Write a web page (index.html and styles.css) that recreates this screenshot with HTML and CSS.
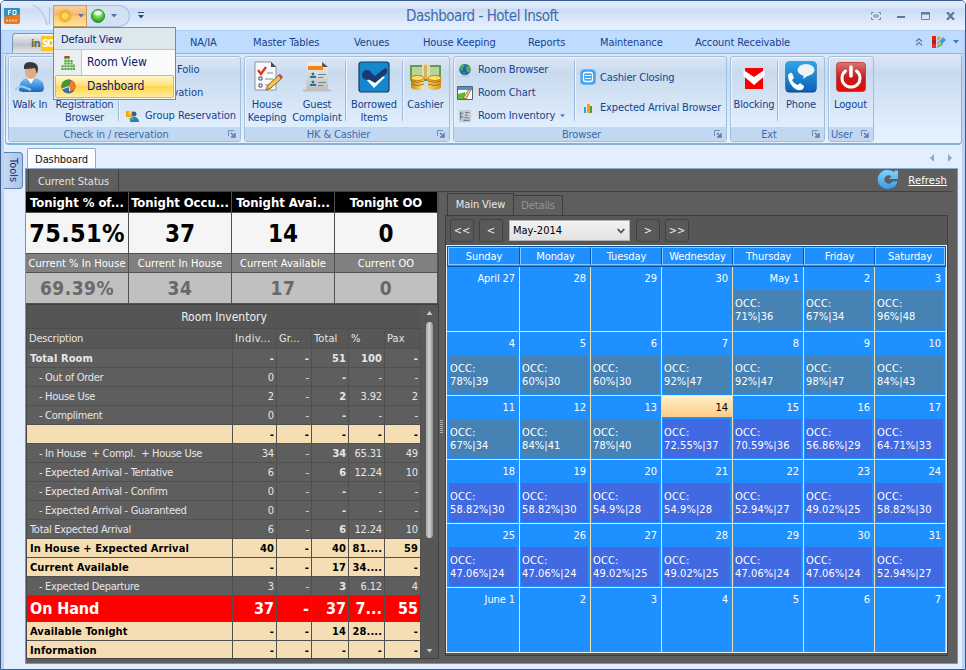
FILE: index.html
```html
<!DOCTYPE html>
<html lang="en">
<head>
<meta charset="utf-8">
<title>Dashboard - Hotel Insoft</title>
<link rel="stylesheet" href="styles.css">
</head>
<body>
<svg width="0" height="0" class="defs">
  <defs>
    <linearGradient id="gBlue" x1="0" y1="0" x2="0" y2="1"><stop offset="0" stop-color="#7cc4f4"/><stop offset="1" stop-color="#1567c4"/></linearGradient>
    <linearGradient id="gSky" x1="0" y1="0" x2="0" y2="1"><stop offset="0" stop-color="#2fa4e8"/><stop offset="1" stop-color="#0b63b8"/></linearGradient>
    <linearGradient id="gRed" x1="0" y1="0" x2="0" y2="1"><stop offset="0" stop-color="#d87878"/><stop offset=".5" stop-color="#c81c1c"/><stop offset="1" stop-color="#e80808"/></linearGradient>
    <linearGradient id="gGold" x1="0" y1="0" x2="1" y2="0"><stop offset="0" stop-color="#c88a10"/><stop offset=".4" stop-color="#ffe680"/><stop offset="1" stop-color="#d89a18"/></linearGradient>
    <linearGradient id="gPaper" x1="0" y1="0" x2="0" y2="1"><stop offset="0" stop-color="#eeeeee"/><stop offset="1" stop-color="#bdbdbd"/></linearGradient>
    <linearGradient id="gRefresh" x1="0" y1="0" x2="0" y2="1"><stop offset="0" stop-color="#7fd2fb"/><stop offset="1" stop-color="#359df0"/></linearGradient>
    <radialGradient id="gOrb" cx=".5" cy=".3" r=".7"><stop offset="0" stop-color="#e4ffd8"/><stop offset=".45" stop-color="#6fd84e"/><stop offset="1" stop-color="#22901c"/></radialGradient>
    <symbol id="launch" viewBox="0 0 8 8"><path d="M0.5 6V.5H6" fill="none" stroke="#6f8fb5"/><path d="M3 3l3 3M7 3v4H3" fill="none" stroke="#5878a5" stroke-width="1.4"/></symbol>
    <symbol id="down" viewBox="0 0 6 4"><path d="M0 0h6L3 3.5z"/></symbol>
    <symbol id="globe" viewBox="0 0 16 16"><circle cx="8" cy="7.5" r="6.5" fill="#1e66b4"/><path d="M3 3c2-2 4-2 5-1L7 4 5 6 6 8 4 9 2 6zM9 4l4-1 1.5 4-2 4-2-1-1-3zM6 10l2 1-1 3z" fill="#52b04a"/><path d="M4 15h8" stroke="#aebccc"/></symbol>
  </defs>
</svg>
<div class="window">
  <header class="titlebar">
    <svg class="app-icon" viewBox="0 0 16 16" width="16" height="16"><rect width="16" height="10" rx="1" fill="#2a92c8"/><path d="M0 9l16-3v8q0 2-2 2H2q-2 0-2-2z" fill="#e87820"/><path d="M4.500 7V2.500H7M4.500 4.500h2M9 2.500h3v4H9z" stroke="#fff" fill="none"/><path d="M2 12.500h12" stroke="#f7c08a" stroke-width="2" stroke-dasharray="2 1"/></svg>
    <div class="quick">
      <svg class="curve" viewBox="0 0 20 22" width="20" height="22"><path d="M3 1h14v19h-3Q11 4 3 1" fill="#d6e4f5"/><path d="M0 .5Q10 3 14 20" fill="none" stroke="#a9c0de"/><path d="M16.500 2v17" stroke="#a9c0de"/></svg>
      <div class="q-btn active">
        <svg viewBox="0 0 16 16" width="16" height="16"><path d="M8 1v14M1 8h14M3 3l10 10M13 3L3 13M5.300 1.500l5.400 13M10.700 1.500l-5.400 13M1.500 5.300l13 5.400M1.500 10.700l13-5.400" stroke="#f2ae18" stroke-width="1.200"/><circle cx="8" cy="8" r="4.300" fill="#ffd45e" stroke="#e6a010"/></svg>
        <svg class="caret" viewBox="0 0 6 4" width="6" height="4"><use href="#down"/></svg>
      </div>
      <div class="q-btn tail">
        <svg viewBox="0 0 16 16" width="16" height="16"><circle cx="8" cy="8" r="6.500" fill="url(#gOrb)" stroke="#2c8a2c"/><ellipse cx="8" cy="5" rx="4" ry="2.200" fill="#fff" opacity=".65"/></svg>
        <svg class="caret" viewBox="0 0 6 4" width="6" height="4"><use href="#down"/></svg>
      </div>
      <svg class="more" viewBox="0 0 6 7" width="6" height="7"><path d="M0 .5h6" stroke="#2b4c85"/><path d="M0 3h6L3 6.500z" fill="#2b4c85"/></svg>
    </div>
    <h1>Dashboard - Hotel Insoft</h1>
    <div class="win-buttons">
      <svg viewBox="0 0 10 8" width="10" height="8"><path d="M.5 2.500v-2h2M7.500.5h2v2M9.500 5.500v2h-2M2.500 7.500h-2v-2M3 3h4v2H3z" fill="none" stroke="#7085a3"/></svg>
      <svg viewBox="0 0 8 8" width="8" height="8"><path d="M0 5h8" stroke="#60779c" stroke-width="2"/></svg>
      <svg viewBox="0 0 9 8" width="9" height="8"><path d="M.5.5h8v7h-8z" fill="none" stroke="#7085a3"/><path d="M0 1.500h9" stroke="#60779c" stroke-width="2"/></svg>
      <svg viewBox="0 0 9 8" width="9" height="8"><path d="M1 0l7 8M8 0L1 8" stroke="#60779c" stroke-width="2.200"/></svg>
    </div>
  </header>

  <nav class="tabs">
    <div class="app-tab"><b>in</b><span>SO</span></div>
    <div class="tab-list">
      <span>NA/IA</span><span>Master Tables</span><span>Venues</span><span>House Keeping</span><span>Reports</span><span>Maintenance</span><span>Account Receivable</span>
    </div>
    <div class="tab-tools">
      <svg viewBox="0 0 8 8" width="8" height="8"><path d="M1 3.500L4 .8l3 2.700M1 7.300l3-2.700 3 2.700" fill="none" stroke="#5c79a8" stroke-width="1.300"/></svg>
      <svg viewBox="0 0 15 14" width="15" height="14"><path d="M1 1h4v4H1z" fill="#f01818"/><path d="M1 5h4v4H1z" fill="#b02020"/><path d="M1 9h4v4H1z" fill="#ee2c2c"/><path d="M6 2l3-1 1 3-4 2z" fill="#f4a040"/><path d="M6 7l3-2 1 2-4 3z" fill="#b8a878"/><path d="M6 11l5-4 1 3-6 3z" fill="#78b858"/><path d="M9 6l3-4 3 3-4 4z" fill="#2f9bea"/></svg>
      <svg class="caret" viewBox="0 0 6 4" width="6" height="4"><use href="#down"/></svg>
    </div>
  </nav>

  <section class="ribbon">
    <div class="group g-check">
      <div class="body">
        <div class="big walk"><svg viewBox="0 0 32 32" width="32" height="32"><path d="M5 30q0-12 8-13h8q9 2 9 10 0 4-4 4H9z" fill="url(#gBlue)"/><path d="M13 17l4 6 4-7z" fill="#fff"/><ellipse cx="17" cy="10" rx="6" ry="8" fill="#e4ab7e"/><path d="M10 8Q9 1 16 1q8 0 8 7l-1 5-2-6q-6 1-10 1z" fill="#38383a"/><path d="M1 29q5-5 9-3l7 3" fill="none" stroke="#9dcbee" stroke-width="2"/></svg><span>Walk In</span></div>
        <div class="big reg"><i></i><span>Registration<br>Browser</span></div>
        <i class="sep"></i>
        <div class="small-list">
          <div><i></i><span>Guest Folio</span></div>
          <div><i></i><span>Reservation</span></div>
          <div><svg viewBox="0 0 14 14" width="14" height="14"><path d="M1 2h6v6H1z" fill="#f3a514"/><circle cx="6" cy="4" r="2.500" fill="#fcd34a"/><circle cx="9" cy="5" r="2.500" fill="#48607d"/><path d="M5 13q0-6 5-5 4 1 4 5z" fill="#2381ba"/><path d="M3 10l5-2 1 3z" fill="#62ad3d"/></svg><span>Group Reservation</span></div>
        </div>
      </div>
      <div class="caption"><span>Check in / reservation</span><svg viewBox="0 0 8 8" width="8" height="8"><use href="#launch"/></svg></div>
    </div>

    <div class="group g-hk">
      <div class="body">
        <div class="big hk"><svg viewBox="0 0 32 32" width="32" height="32"><path d="M4 1h16l5 5v23H4z" fill="#fbfbfd" stroke="#8d929c"/><path d="M20 1v5h5z" fill="#454a54"/><path d="M7 9l3 4 5-7" fill="none" stroke="#e03420" stroke-width="2.300"/><path d="M8 16h3v3H8zM8 23h3v3H8z" fill="none" stroke="#444e60"/><path d="M16 12h6M14 18h8M14 24h4" stroke="#7888a0"/><path d="M15 29l2-5L28 14l3 3-11 10z" fill="#f3c64a" stroke="#85602a"/><path d="M27 14l2-1 3 3-2 2z" fill="#c83c50"/></svg><span>House<br>Keeping</span></div>
        <div class="big guest"><svg viewBox="0 0 32 32" width="32" height="32"><path d="M2 29.500h28" stroke="#b9c0c9" stroke-width="2"/><path d="M6 1h15l6 5v24H5z" fill="url(#gPaper)"/><path d="M21 1v5h6z" fill="#555"/><path d="M7 5h15v4H7z" fill="#ef8711"/><circle cx="12" cy="13" r="1.500" fill="#24739c"/><circle cx="12" cy="21" r="1.500" fill="#24739c"/><path d="M9 16h6M9 24h6" stroke="#24739c" stroke-width="2"/><path d="M17 13.500h8M17 16.500h5M17 21.500h8M17 24.500h5" stroke="#748692"/></svg><span>Guest<br>Complaint</span></div>
        <i class="sep"></i>
        <div class="big borrow"><svg viewBox="0 0 32 32" width="32" height="32"><rect x="1" y="1" width="30" height="30" rx="2.500" fill="#1686cf" stroke="#173c5d" stroke-width="1.200"/><path d="M7 17l9 10 11-11-4-1-6 5-5-5z" fill="#fff"/><circle cx="9" cy="14" r="5" fill="#173b70"/><path d="M9 9.500l8 5.500L27 7l2 1v4L17 22l-7-4z" fill="#173b70"/></svg><span>Borrowed<br>Items</span></div>
        <i class="sep"></i>
        <div class="big cash"><svg viewBox="0 0 34 32" width="34" height="32"><path d="M1 4h31v16H1z" fill="#679c4a"/><path d="M3 6h27v12H3z" fill="#b8d49b"/><path d="M13 3h8v15h-8z" fill="#e3dcb0"/><path d="M15 4h3v14h-3z" fill="#d6b262"/><path d="M2 17h13v10q-7 4-13 0zM19 17h13v10q-7 4-13 0z" fill="url(#gGold)"/><path d="M2 20q7 3 13 0M2 23q7 3 13 0M19 20q7 3 13 0M19 23q7 3 13 0" stroke="#a86d10" fill="none"/><ellipse cx="8.500" cy="17" rx="6.500" ry="2.500" fill="#ffdf63" stroke="#bd820d"/><ellipse cx="25.500" cy="17" rx="6.500" ry="2.500" fill="#ffdf63" stroke="#bd820d"/></svg><span>Cashier</span></div>
      </div>
      <div class="caption"><span>HK &amp; Cashier</span><svg viewBox="0 0 8 8" width="8" height="8"><use href="#launch"/></svg></div>
    </div>

    <div class="group g-browser">
      <div class="body">
        <div class="small-list">
          <div><svg viewBox="0 0 16 16" width="14" height="14"><use href="#globe"/></svg><span>Room Browser</span></div>
          <div><svg viewBox="0 0 16 16" width="16" height="16"><path d="M.5 1.500h15v13H.5z" fill="#fff" stroke="#56606c"/><path d="M1 2h14v3H1z" fill="#379be3"/><path d="M1 9l7-2v7H1z" fill="#65b735"/><path d="M6 13l6-9 2 1-5 9z" fill="#edc784" stroke="#77583a" stroke-width=".7"/></svg><span>Room Chart</span></div>
          <div><svg viewBox="0 0 16 16" width="14" height="14"><path d="M1 1h14v14H1z" fill="#c9cdd1"/><path d="M3 3v9M3 5h3M3 9h3M8 4h5M8 7h3M7 10h6M6 13h7" stroke="#70808f" stroke-width="1.400"/></svg><span>Room Inventory</span><svg class="caret" viewBox="0 0 6 4" width="5" height="4"><use href="#down"/></svg></div>
        </div>
        <i class="sep"></i>
        <div class="small-list two">
          <div><svg viewBox="0 0 16 16" width="16" height="16"><rect x=".5" y=".5" width="15" height="15" rx="3.500" fill="#42a2ee" stroke="#6cb8ee"/><rect x="3.500" y="3.500" width="9" height="9" rx="2" fill="none" stroke="#fff" stroke-width="1.300"/><path d="M5 6.500h6M5 9.500h6" stroke="#fff"/></svg><span>Cashier Closing</span></div>
          <div><svg viewBox="0 0 14 14" width="14" height="14"><path d="M3 1h7l3 3v9H3z" fill="#e3e5e8"/><path d="M3 7h2v6H3z" fill="#23a0e8"/><path d="M6 4h3v9H6z" fill="#f2a01c"/><path d="M9 6h2v7H9z" fill="#4c9e3d"/></svg><span>Expected Arrival Browser</span></div>
        </div>
      </div>
      <div class="caption"><span>Browser</span><svg viewBox="0 0 8 8" width="8" height="8"><use href="#launch"/></svg></div>
    </div>

    <div class="group g-ext">
      <div class="body">
        <div class="big block"><svg viewBox="0 0 32 32" width="32" height="32"><path d="M7 7h18v21H7z" fill="#f80000"/><path d="M5.500 9L16 16l10.500-7v6L16 24 5.500 15z" fill="#fff"/></svg><span>Blocking</span></div>
        <i class="sep"></i>
        <div class="big phone"><svg viewBox="0 0 32 32" width="32" height="32"><rect x=".5" y=".5" width="31" height="31" rx="4" fill="#12406f"/><rect x=".5" y=".5" width="31" height="30" rx="4" fill="url(#gSky)"/><path d="M3 14q2-3 4-2l2 5-2 2q2 4 6 5l2-2 4 3q0 3-3 4-5 1-9-4-4-5-4-11z" fill="#fff"/><ellipse cx="21" cy="9" rx="8.500" ry="6" fill="#eef1f5"/><path d="M19 12l-1 6 6-4z" fill="#eef1f5"/></svg><span>Phone</span></div>
      </div>
      <div class="caption"><span>Ext</span><svg viewBox="0 0 8 8" width="8" height="8"><use href="#launch"/></svg></div>
    </div>

    <div class="group g-user">
      <div class="body">
        <div class="big logout"><svg viewBox="0 0 32 32" width="32" height="32"><rect x="1.500" y="1.500" width="29" height="29" rx="3" fill="url(#gRed)" stroke="#b44" /><path d="M10.500 10a9 9 0 1 0 11 0" fill="none" stroke="#fff" stroke-width="3" stroke-linecap="round"/><path d="M16 6v9" stroke="#fff" stroke-width="3.500" stroke-linecap="round"/></svg><span>Logout</span></div>
      </div>
      <div class="caption"><span>User</span><svg viewBox="0 0 8 8" width="8" height="8"><use href="#launch"/></svg></div>
    </div>
  </section>

  <main class="workspace">
    <aside class="tools-tab"><span>Tools</span></aside>
    <div class="document">
      <div class="doc-tabs"><span class="doc-tab">Dashboard</span><svg viewBox="0 0 24 8" width="24" height="8"><path d="M5 0v8L1 4zM19 0v8l4-4z" fill="#8fa6c6"/></svg></div>
      <div class="board">
        <div class="board-head">
          <span class="status-tab">Current Status</span>
          <div class="refresh"><svg viewBox="0 0 22 20" width="22" height="20"><path d="M18 1.500h3v8.500h-9l2.500-2.800a4.300 4.300 0 1 0 1 5.300h5A10 9.500 0 1 1 17 3z" fill="url(#gRefresh)"/></svg><a>Refresh</a></div>
        </div>
        <div class="panes">
          <div class="left">
            <div class="stats">
              <div class="s1">Tonight % of...</div><div class="s1">Tonight Occu...</div><div class="s1">Tonight Avai...</div><div class="s1">Tonight OO</div>
              <div class="s2">75.51%</div><div class="s2">37</div><div class="s2">14</div><div class="s2">0</div>
              <div class="s3">Current % In House</div><div class="s3">Current In House</div><div class="s3">Current Available</div><div class="s3">Current OO</div>
              <div class="s4">69.39%</div><div class="s4">34</div><div class="s4">17</div><div class="s4">0</div>
            </div>
            <div class="inventory">
              <div class="inv-main">
                <div class="inv-title">Room Inventory</div>
                <div class="row head"><span>Description</span><span>Indiv...</span><span>Gr...</span><span>Total</span><span>%</span><span>Pax</span></div>
                <div class="row total"><span>Total Room</span><span>-</span><span>-</span><span>51</span><span>100</span><span>-</span></div>
                <div class="row sub"><span>- Out of Order</span><span>0</span><span>-</span><span>-</span><span>-</span><span>-</span></div>
                <div class="row sub"><span>- House Use</span><span>2</span><span>-</span><span>2</span><span>3.92</span><span>2</span></div>
                <div class="row sub"><span>- Compliment</span><span>0</span><span>-</span><span>-</span><span>-</span><span>-</span></div>
                <div class="row wheat"><span></span><span>-</span><span>-</span><span>-</span><span>-</span><span>-</span></div>
                <div class="row sub"><span>- In House &nbsp;+ Compl. &nbsp;+ House Use</span><span>34</span><span>-</span><span>34</span><span>65.31</span><span>49</span></div>
                <div class="row sub"><span>- Expected Arrival - Tentative</span><span>6</span><span>-</span><span>6</span><span>12.24</span><span>10</span></div>
                <div class="row sub"><span>- Expected Arrival - Confirm</span><span>0</span><span>-</span><span>-</span><span>-</span><span>-</span></div>
                <div class="row sub"><span>- Expected Arrival - Guaranteed</span><span>0</span><span>-</span><span>-</span><span>-</span><span>-</span></div>
                <div class="row"><span>Total Expected Arrival</span><span>6</span><span>-</span><span>6</span><span>12.24</span><span>10</span></div>
                <div class="row wheat"><span>In House + Expected Arrival</span><span>40</span><span>-</span><span>40</span><span>81....</span><span>59</span></div>
                <div class="row wheat"><span>Current Available</span><span>-</span><span>-</span><span>17</span><span>34....</span><span>-</span></div>
                <div class="row sub"><span>- Expected Departure</span><span>3</span><span>-</span><span>3</span><span>6.12</span><span>4</span></div>
                <div class="row red"><span>On Hand</span><span>37</span><span>-</span><span>37</span><span>7...</span><span>55</span></div>
                <div class="row wheat"><span>Available Tonight</span><span>-</span><span>-</span><span>14</span><span>28....</span><span>-</span></div>
                <div class="row wheat last"><span>Information</span><span>-</span><span>-</span><span>-</span><span>-</span><span>-</span></div>
              </div>
              <div class="scroll"><svg viewBox="0 0 6 4" width="7" height="4"><path d="M0 4h6L3 0z"/></svg><i></i><svg viewBox="0 0 6 4" width="7" height="4"><use href="#down"/></svg></div>
            </div>
          </div>
          <div class="splitter"><i></i></div>
          <div class="right">
            <div class="view-tabs"><span class="on">Main View</span><span>Details</span></div>
            <div class="view">
              <div class="toolbar">
                <span class="btn">&lt;&lt;</span><span class="btn">&lt;</span>
                <div class="combo"><span>May-2014</span><svg viewBox="0 0 8 6" width="8" height="6"><path d="M.7 1l3.300 3.500L7.300 1" fill="none" stroke="#505050" stroke-width="1.800"/></svg></div>
                <span class="btn">&gt;</span><span class="btn">&gt;&gt;</span>
              </div>
              <div class="calendar">
                <div class="days"><span>Sunday</span><span>Monday</span><span>Tuesday</span><span>Wednesday</span><span>Thursday</span><span>Friday</span><span>Saturday</span></div>
                <div class="weeks">
                  <div><b>April 27</b></div><div><b>28</b></div><div><b>29</b></div><div><b>30</b></div><div><b>May 1</b><p>OCC:<br>71%|36</p></div><div><b>2</b><p>OCC:<br>67%|34</p></div><div><b>3</b><p>OCC:<br>96%|48</p></div>
                  <div><b>4</b><p>OCC:<br>78%|39</p></div><div><b>5</b><p>OCC:<br>60%|30</p></div><div><b>6</b><p>OCC:<br>60%|30</p></div><div><b>7</b><p>OCC:<br>92%|47</p></div><div><b>8</b><p>OCC:<br>92%|47</p></div><div><b>9</b><p>OCC:<br>98%|47</p></div><div><b>10</b><p>OCC:<br>84%|43</p></div>
                  <div><b>11</b><p>OCC:<br>67%|34</p></div><div><b>12</b><p>OCC:<br>84%|41</p></div><div><b>13</b><p>OCC:<br>78%|40</p></div><div class="today"><b>14</b><p class="f">OCC:<br>72.55%|37</p></div><div><b>15</b><p class="f">OCC:<br>70.59%|36</p></div><div><b>16</b><p class="f">OCC:<br>56.86%|29</p></div><div><b>17</b><p class="f">OCC:<br>64.71%|33</p></div>
                  <div><b>18</b><p class="f">OCC:<br>58.82%|30</p></div><div><b>19</b><p class="f">OCC:<br>58.82%|30</p></div><div><b>20</b><p class="f">OCC:<br>54.9%|28</p></div><div><b>21</b><p class="f">OCC:<br>54.9%|28</p></div><div><b>22</b><p class="f">OCC:<br>52.94%|27</p></div><div><b>23</b><p class="f">OCC:<br>49.02%|25</p></div><div><b>24</b><p class="f">OCC:<br>58.82%|30</p></div>
                  <div><b>25</b><p class="f">OCC:<br>47.06%|24</p></div><div><b>26</b><p class="f">OCC:<br>47.06%|24</p></div><div><b>27</b><p class="f">OCC:<br>49.02%|25</p></div><div><b>28</b><p class="f">OCC:<br>49.02%|25</p></div><div><b>29</b><p class="f">OCC:<br>47.06%|24</p></div><div><b>30</b><p class="f">OCC:<br>47.06%|24</p></div><div><b>31</b><p class="f">OCC:<br>52.94%|27</p></div>
                  <div><b>June 1</b></div><div><b>2</b></div><div><b>3</b></div><div><b>4</b></div><div><b>5</b></div><div><b>6</b></div><div><b>7</b></div>
                </div>
              </div>
            </div>
          </div>
        </div>
      </div>
    </div>
  </main>

  <div class="menu">
    <div class="menu-head">Default View</div>
    <div class="item"><svg viewBox="0 0 14 14" width="14" height="14"><path d="M4.500 14V0M7.500 14V0M10.500 14V4M1.500 14V9M13 14V8" stroke="#58a838" stroke-width="2.300" stroke-dasharray="2 .7"/><path d="M3.500 1h5" stroke="#e03030" stroke-width="2"/></svg><span>Room View</span></div>
    <div class="item hot"><svg viewBox="0 0 15 15" width="15" height="15"><circle cx="7.500" cy="7.500" r="7" fill="#3c6ea0"/><path d="M7.500 7.500L1 10Q-1 3 5 1l4-.5z" fill="#46962e"/><path d="M8 7l2-6q5 2 5 7-2 4-6 4z" fill="#f07a28"/><path d="M1 10l7-2.500 1 5" fill="none" stroke="#e8f0f4"/></svg><span>Dashboard</span></div>
  </div>
</div>
</body>
</html>
```
FILE: styles.css
```css
* { box-sizing: border-box; }
body { margin: 0; overflow: hidden; font: 11px/13px Tahoma, "DejaVu Sans Condensed", "DejaVu Sans", sans-serif; font-stretch: condensed; letter-spacing: -.3px; white-space: nowrap; color: #15428b; }
svg { display: block; flex: none; }
.defs { position: absolute; }
.caret { fill: #4f74ad; }
.window { position: relative; width: 966px; height: 670px; display: flex; flex-direction: column; background: #e3efff; border: 1px solid #3b5a8c; border-radius: 5px 5px 0 0; box-shadow: inset 3px 0 #bcd2f0, inset -3px 0 #bcd2f0; }

.titlebar { height: 30px; flex: none; display: flex; align-items: center; background: linear-gradient(#e3edfb 0, #d9e6f8 7px, #cbdcf3 8px, #e8f2ff 28px); border-bottom: 1px solid #aed0f5; border-radius: 4px 4px 0 0; position: relative; }
.app-icon { margin-left: 3px; }
.quick { display: flex; align-items: center; margin-left: 13px; height: 22px; }
.q-btn { height: 22px; display: flex; align-items: center; }
.q-btn.active { width: 34px; padding-left: 3px; gap: 5px; border: 1px solid #c59a5c; background: linear-gradient(#fbd0a0, #f6b566 45%, #fbc77a 50%, #ffe59b); }
.q-btn.tail { width: 43px; padding-left: 3px; gap: 5px; border: 1px solid #a9c0de; border-left: 0; border-radius: 0 11px 11px 0; background: #d2e1f4; }
.more { margin-left: 8px; }
h1 { margin: 0 0 0 262px; width: 160px; font-size: 15px; line-height: 18px; font-weight: 400; color: #3e6aaa; letter-spacing: -.5px; }
.win-buttons { margin-left: auto; margin-right: 10px; display: flex; gap: 16px; }

.tabs { height: 23px; flex: none; margin: 0 2px; padding-left: 9px; display: flex; align-items: center; background: #bfdbff; border-bottom: 1px solid #8db2e3; letter-spacing: -.1px; }
.app-tab { align-self: flex-end; width: 106px; height: 20px; margin-right: 72px; padding-left: 18px; display: flex; align-items: center; border: 1px solid #8395ac; border-bottom: 0; border-radius: 4px 4px 0 0; background: linear-gradient(#f0f2f4, #c4cbd3 50%, #b5bec8 51%, #e6e9ee); font-size: 11px; color: #5b7043; letter-spacing: -.6px; }
.app-tab span { margin-left: 1px; padding: 1px; background: #ffc91c; color: #fff; font-weight: 700; font-size: 10px; letter-spacing: -1.5px; }
.tab-list { display: grid; grid-template-columns: 63px 101px 69px 105px 72px 95px 120px; padding-top: 1px; }
.tab-tools { margin-left: auto; margin-right: 4px; display: flex; align-items: center; gap: 7px; }
.tab-tools svg:first-child { margin-right: 1px; }

.ribbon { height: 91px; flex: none; margin: 0 3px 0 4px; padding: 2px; display: flex; border: 1px solid #8db2e3; border-top: 0; border-bottom: 2px solid #84b2d2; border-radius: 4px; background: linear-gradient(#dee8f5 0, #cfdef0 14px, #c8daee 18px, #e3f1ff 80px); }
.group { height: 86px; margin-right: 3px; display: flex; flex-direction: column; border: 1px solid #9fbfdc; border-radius: 3px; overflow: hidden; box-shadow: inset 1px 1px #eef5fd; }
.g-check { width: 233px; } .g-hk { width: 206px; } .g-browser { width: 274px; } .g-ext { width: 95px; } .g-user { width: 46px; }
.body { flex: 1; display: flex; padding-top: 4px; }
.caption { height: 14px; padding: 0 4px 0 0; display: flex; align-items: center; background: #c1d8f0; color: #3e6aaa; }
.caption span { flex: 1; padding-right: 5px; text-align: center; letter-spacing: -.15px; }
.g-user .caption { padding-left: 2px; } .g-user .caption span { text-align: left; }
.big { display: flex; flex-direction: column; align-items: center; text-align: center; letter-spacing: -.15px; }
.big span { margin-top: 5px; }
.big i { height: 32px; }
.walk { width: 42px; } .reg { width: 67px; } .hk { width: 44px; } .guest { width: 56px; } .borrow { width: 56px; } .cash { width: 45px; } .block { width: 46px; } .phone { width: 46px; } .logout { width: 43px; }
.sep { width: 1px; height: 60px; flex: none; background: #9db9dc; box-shadow: 1px 0 #edf4fd; }
.small-list { display: flex; flex-direction: column; letter-spacing: -.1px; }
.small-list div { height: 23px; display: flex; align-items: center; }
.small-list svg:first-child, .small-list div i { width: 16px; }
.small-list span { margin-left: 5px; }
.small-list .caret { margin-left: 5px; }
.g-check .small-list { margin: -3px 0 0 5px; letter-spacing: -.05px; }
.g-browser .small-list { margin: -3px 0 0 3px; width: 117px; }
.g-browser .small-list.two { margin: 1px 0 0 5px; width: auto; letter-spacing: -.15px; }
.small-list.two span { margin-left: 4px; }
.two div { height: 30px; }

.workspace { flex: 1; display: flex; padding: 3px 7px 5px 3px; min-height: 0; }
.tools-tab { width: 19px; height: 37px; margin-top: 4px; display: flex; align-items: center; justify-content: center; border: 1px solid #5c82ba; border-left: 0; border-radius: 0 4px 4px 0; background: linear-gradient(90deg, #c5d9f2, #a9c5e8); }
.tools-tab span { writing-mode: vertical-rl; letter-spacing: 0; color: #0f2a78; }
.document { flex: 1; margin-left: 2px; display: flex; flex-direction: column; min-width: 0; }
.doc-tabs { height: 20px; display: flex; align-items: center; justify-content: space-between; padding: 0 5px 0 2px; }
.doc-tab { width: 69px; height: 21px; align-self: flex-start; padding-top: 4px; text-align: center; background: #fafcff; border: 1px solid #8da9d4; border-bottom: 0; border-radius: 2px 2px 0 0; color: #111; letter-spacing: -.1px; }
.board { flex: 1; display: flex; flex-direction: column; background: #5e5e5e; border: 1px solid #7c93b8; border-top: 1px solid #8da9d4; }
.board-head { height: 23px; display: flex; justify-content: space-between; margin-right: 4px; border-bottom: 1px solid #404040; }
.status-tab { width: 91px; margin-left: 2px; padding-top: 6px; text-align: center; color: #e4e4e4; letter-spacing: -.05px; border: 1px solid #404040; border-top: 0; border-bottom: 0; background: #5e5e5e; }
.refresh { display: flex; gap: 9px; margin-right: 6px; color: #fff; }
.refresh a { margin-top: 5px; text-decoration: underline; letter-spacing: .2px; }
.panes { flex: 1; display: flex; }
.left { width: 413px; }
.stats { display: grid; grid-template-columns: 103px 103px 103px 103px; grid-template-rows: 21px 41px 19px 31px; height: 112px; background: #515151; }
.stats div { margin: 0 1px 1px 0; text-align: center; overflow: hidden; }
.stats .s1 { background: #000; color: #fff; font: bold 13px/21px Tahoma, "DejaVu Sans Condensed", sans-serif; letter-spacing: -.05px; }
.s2 { background: #f5f5f5; color: #000; font-weight: 700; font-size: 24px; line-height: 42px; letter-spacing: 0; }
.stats .s2:nth-child(5) { font-size: 25px; letter-spacing: .3px; }
.s3 { background: #808080; color: #fff; line-height: 19px; letter-spacing: .05px; }
.s4 { background: #c0c0c0; color: #696969; font-weight: 700; font-size: 19px; line-height: 30px; letter-spacing: .5px; }
.inventory { display: flex; height: 355px; border: 1px solid #404040; border-left-color: #484848; background: #575757; margin-top: 0; overflow: hidden; }
.inv-main { width: 394px; }
.inv-title { height: 24px; text-align: center; font-size: 12px; line-height: 24px; color: #f0f0f0; letter-spacing: 0; background: #555; border-bottom: 1px solid #4c4c4c; }
.row { display: grid; grid-template-columns: 206px 44px 35px 37px 36px 36px; height: 19px; color: #e6e6e6; background: #5e5e5e; line-height: 19px; letter-spacing: -.15px; }
.row span { border-right: 1px solid #505050; border-bottom: 1px solid #505050; padding: 0 2px; text-align: right; overflow: hidden; }
.row span:first-child { text-align: left; padding-left: 3px; letter-spacing: -.3px; }
.row.sub span:first-child { padding-left: 12px; }
.row span:nth-child(4) { font-weight: 700; }
.row.head { height: 20px; line-height: 20px; background: #575757; }
.row.head span { text-align: left; font-weight: 400; padding-left: 2px; letter-spacing: .1px; }
.row.head span:nth-child(2) { letter-spacing: .4px; }
.row.head span:first-child { letter-spacing: -.2px; }
.row.total, .row.wheat { font-weight: 700; }
.row.total span, .row.wheat span, .row.total span:first-child, .row.wheat span:first-child { letter-spacing: .1px; }
.row.total { line-height: 20px; }
.row.wheat { background: #f5deb3; color: #000; }
.row.red { height: 26px; line-height: 25px; background: #f00; color: #fff; font-weight: 700; font-size: 16px; letter-spacing: 0; }
.row.red span:first-child { letter-spacing: -.1px; }
.row.last { height: 18px; }
.scroll { flex: 1; display: flex; flex-direction: column; align-items: center; padding: 6px 1px 5px 0; fill: #c8c8c8; }
.scroll i { width: 7px; height: 216px; margin: 7px 0 auto; border-radius: 4px; background: linear-gradient(90deg, #a8a8a8, #d0d0d0, #909090); }
.splitter { width: 6px; display: flex; justify-content: center; padding: 228px 1px 0 0; }
.splitter i { width: 3px; height: 14px; background: repeating-linear-gradient(#b0b0b0 0 1px, #5e5e5e 1px 2px); }
.right { width: 503px; padding-top: 1px; }
.view-tabs { height: 22px; display: flex; align-items: flex-end; padding-left: 2px; }
.view-tabs span { width: 49px; height: 20px; padding-top: 3px; text-align: center; color: #959595; border: 1px solid #3e3e3e; border-bottom: 0; border-left: 0; letter-spacing: -.1px; }
.view-tabs .on { width: 67px; height: 22px; padding-top: 4px; color: #e8e8e8; border-left: 1px solid #3e3e3e; }
.view { height: 441px; border: 1px solid #3e3e3e; background: #575757; }
.toolbar { height: 29px; display: flex; align-items: center; gap: 5px; padding-left: 4px; }
.btn { width: 24px; height: 23px; line-height: 21px; border: 1px solid #404040; border-radius: 3px; background: #595959; color: #eee; text-align: center; font-size: 11px; letter-spacing: 0; }
.combo { width: 121px; height: 21px; margin: 0 1px; padding: 0 4px 0 3px; display: flex; align-items: center; justify-content: space-between; color: #000; background: linear-gradient(#f2f2f2, #e2e2e2); border: 1px solid #b2b2b2; letter-spacing: 0; }
.calendar { width: 501px; height: 408px; border: 1px solid #f0f0f0; background: #1e90ff; overflow: hidden; }
.days { height: 21px; display: grid; grid-template-columns: 72px repeat(5, 71px) 71px; border: 1px solid #0058b4; color: #fff; text-align: center; }
.days span { height: 18px; line-height: 17px; border-top: 1px solid #8cc8ff; border-bottom: 1px solid #8cc8ff; border-left: 1px solid #8cc8ff; border-right: 1px solid #0058b4; letter-spacing: -.1px; }
.days span:last-child { margin-right: 1px; border-right-color: #8cc8ff; }
.weeks { display: grid; grid-template-columns: 73px repeat(5, 71px) 71px; grid-template-rows: 65px repeat(4, 64px) 64px; }
.weeks > div { border-right: 1px solid #eedfae; border-bottom: 1px solid #f0e4b4; display: flex; flex-direction: column; padding-bottom: 1px; }
.weeks > div:nth-child(7n) { border-right-color: #8cc8ff; }
.weeks > div:nth-child(n+36) { border-bottom: 0; }
.weeks b { height: 23px; padding: 5px 4px 0 0; text-align: right; font-weight: 400; color: #fff; letter-spacing: -.1px; }
.weeks p { flex: 1; margin: 0 2px 0 2px; padding: 7px 0 0 1px; line-height: 13px; color: #fff; background: #4682b4; letter-spacing: .1px; }
.weeks > div:not(:nth-child(7n+1)) p { margin-left: 1px; }
.weeks .f { background: #4169e1; }
.weeks .today b { height: 21px; margin-bottom: 2px; color: #000; background: linear-gradient(#fff0ca, #ffcb85); }

.menu { position: absolute; left: 52px; top: 26px; width: 123px; height: 73px; border: 1px solid #868686; background: linear-gradient(90deg, #e9eef2 27px, #c5c5c5 27px, #c5c5c5 28px, #fafafa 28px); color: #0a1470; }
.menu-head { height: 22px; padding: 5px 0 0 7px; background: #dde7ee; border-bottom: 1px solid #c5c5c5; letter-spacing: -.15px; }
.item { height: 25px; display: flex; align-items: center; padding-left: 7px; font-size: 12px; letter-spacing: 0; }
.item span { margin-left: 12px; }
.item.hot { height: 23px; margin: 0 1px; padding-left: 5px; border: 1px solid #dbb664; border-radius: 2px; background: linear-gradient(#fff6cb, #ffe27c 45%, #ffd74e 50%, #ffec9c); }
.item.hot span { margin-left: 11px; letter-spacing: -.15px; }
```
